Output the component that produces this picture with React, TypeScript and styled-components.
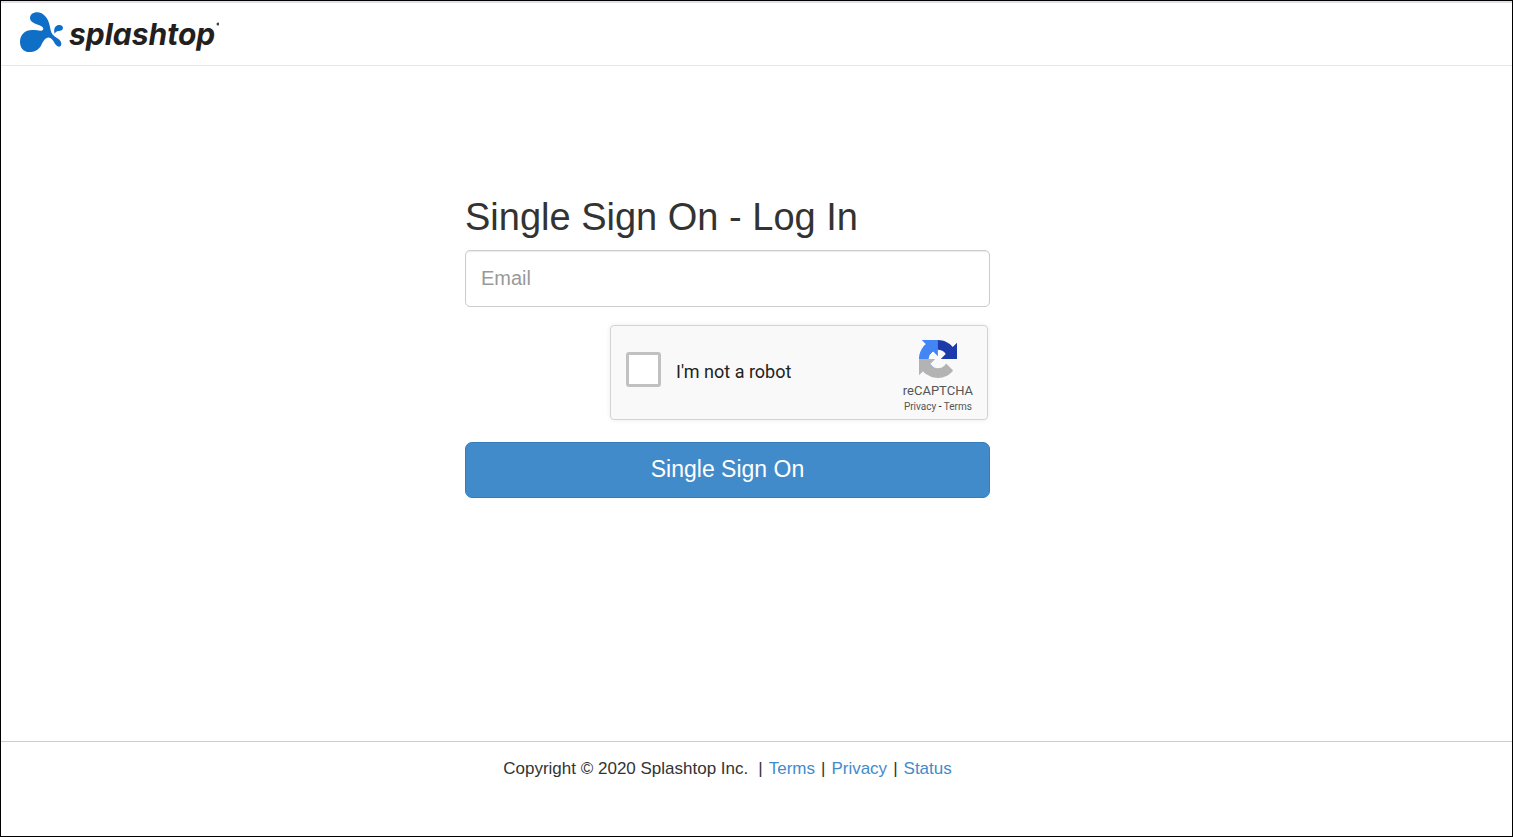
import React from "react";
import styled, { createGlobalStyle } from "styled-components";

const GlobalStyle = createGlobalStyle`
  *, *::before, *::after { box-sizing: border-box; }
  body {
    margin: 0;
    background: #fff;
    color: #333;
    font-family: "Liberation Sans", Arial, sans-serif;
  }
`;

const Page = styled.div`
  min-height: 100vh;
  display: flex;
  flex-direction: column;
  border: 1px solid #000;
`;

const Header = styled.header`
  height: 65px;
  display: flex;
  align-items: center;
  padding: 0 19px 4px;
  border-top: 2px solid #e3dde8;
  border-bottom: 1px solid #e7e7e7;
`;

const Brand = styled.a`
  display: flex;
  align-items: center;
  gap: 5px;
  color: #231f20;
  text-decoration: none;
`;

const Mark = styled.svg`
  width: 44px;
  height: 40px;
`;

const Wordmark = styled.span`
  display: flex;
  padding-top: 4px;
  font: italic 700 30px/40px Inter, sans-serif;
  font-feature-settings: "cv11";
`;

const TrademarkDot = styled.svg`
  width: 4px;
  height: 24px;
`;

const Main = styled.main`
  flex: 1;
  display: flex;
  flex-direction: column;
  align-items: center;
  padding: 128px 58px 40px 0;
`;

const Form = styled.form`
  width: 100%;
  max-width: 525px;
  display: flex;
  flex-direction: column;
`;

const Title = styled.h1`
  margin: 0 0 10px;
  font-size: 38px;
  line-height: 46px;
  font-weight: 400;
`;

const EmailInput = styled.input`
  width: 100%;
  height: 57px;
  padding: 0 15px;
  border: 1px solid #ccc;
  border-radius: 5px;
  box-shadow: inset 0 1px 1px rgba(0, 0, 0, 0.08);
  color: #555;
  font: 20px "Liberation Sans", Arial, sans-serif;
  &::placeholder { color: #999; opacity: 1; }
`;

const Captcha = styled.div`
  align-self: flex-end;
  width: 378px;
  max-width: 100%;
  height: 95px;
  margin: 18px 2px 22px 0;
  padding: 0 14px 0 15px;
  display: flex;
  justify-content: space-between;
  border: 1px solid #d3d3d3;
  border-radius: 4px;
  background: #f9f9f9;
  box-shadow: 0 0 5px rgba(0, 0, 0, 0.08);
  font-family: Roboto, sans-serif;
`;

const RobotLabel = styled.label`
  display: flex;
  align-items: center;
  gap: 15px;
  padding-bottom: 2px;
  color: #222;
  font-size: 18px;
`;

const Checkbox = styled.input`
  appearance: none;
  width: 35px;
  height: 35px;
  margin: 0 0 4px;
  border: 3px solid #c1c1c1;
  border-radius: 3px;
  background: #fff;
`;

const CaptchaBrand = styled.div`
  display: flex;
  flex-direction: column;
  align-items: center;
  padding-top: 14px;
  color: #555;
`;

const CaptchaIcon = styled.svg`
  width: 38px;
  height: 38px;
`;

const CaptchaName = styled.div`
  margin-top: 4px;
  font-size: 13px;
  line-height: 17px;
`;

const CaptchaLinks = styled.div`
  font-size: 10px;
  line-height: 16px;
  color: #000;
  a { color: #555; text-decoration: none; }
`;

const Submit = styled.button`
  height: 56px;
  padding: 0 16px 2px;
  border: 1px solid #357ebd;
  border-radius: 7px;
  background: #428bca;
  color: #fff;
  font: 23px "Liberation Sans", Arial, sans-serif;
`;

const Footer = styled.footer`
  height: 95px;
  display: flex;
  justify-content: center;
  gap: 6px;
  padding: 17px 58px 0 0;
  border-top: 1px solid #ccc;
  font-size: 17px;
  line-height: 20px;
  a { color: #428bca; text-decoration: none; }
`;

const Copyright = styled.span`
  margin-right: 4px;
`;

export default function App() {
  return (
    <>
      <GlobalStyle />
      <Page>
        <Header>
          <Brand href="#">
            <Mark viewBox="60 35 132 120" aria-hidden="true">
              <path
                fill="#0f6fc6"
                d="M60 124C60 103 75 89 97 89C110 89 117 92 124 91C130 90 132 85 127 80C119 72 91 71 90 54C90 43 99 36 111 36C131 36 146 55 150 80C152 93 155 101 163 108C171 114 184 119 184 131C184 137 179 141 173 138C163 133 161 115 148 112C136 110 130 123 123 136C115 149 103 155 88 155C71 155 60 142 60 124Z"
              />
              <path fill="#0f6fc6" d="M164 100C160 86 165 76 176 74C183 73 189 77 189 82C189 89 183 91 176 92C169 93 166 96 164 100Z" />
            </Mark>
            <Wordmark>
              splashtop
              <TrademarkDot viewBox="0 0 4 24" aria-hidden="true">
                <circle cx="3" cy="10" r="1.5" fill="#444" />
              </TrademarkDot>
            </Wordmark>
          </Brand>
        </Header>
        <Main>
          <Form onSubmit={(e) => e.preventDefault()}>
            <Title>Single Sign On - Log In</Title>
            <EmailInput type="email" placeholder="Email" aria-label="Email" />
            <Captcha>
              <RobotLabel>
                <Checkbox type="checkbox" />
                I'm not a robot
              </RobotLabel>
              <CaptchaBrand>
                <CaptchaIcon viewBox="0 0 64 64" aria-hidden="true">
                  <path fill="#1c3aa9" d="M64 31.955l-.033-1.37V4.687l-7.16 7.16C50.948 4.674 42.033.093 32.05.093c-10.4 0-19.622 4.96-25.458 12.64l11.736 11.86a15.55 15.55 0 0 1 4.754-5.334c2.05-1.6 4.952-2.906 8.968-2.906.485 0 .86.057 1.135.163 4.976.393 9.288 3.14 11.828 7.124l-8.307 8.307L64 31.953" />
                  <path fill="#4285f4" d="M31.862.094l-1.37.033H4.594l7.16 7.16C4.58 13.147 0 22.06 0 32.046c0 10.4 4.96 19.622 12.64 25.458L24.5 45.768a15.55 15.55 0 0 1-5.334-4.754c-1.6-2.05-2.906-4.952-2.906-8.968 0-.485.057-.86.163-1.135.393-4.976 3.14-9.288 7.124-11.828l8.307 8.307L31.86.095" />
                  <path fill="#b3b3b3" d="M.001 32.045l.033 1.37v25.898l7.16-7.16c5.86 7.173 14.774 11.754 24.76 11.754 10.4 0 19.622-4.96 25.458-12.64l-11.736-11.86a15.55 15.55 0 0 1-4.754 5.334c-2.05 1.6-4.952 2.906-8.968 2.906-.485 0-.86-.057-1.135-.163-4.976-.393-9.288-3.14-11.828-7.124l8.307-8.307c-10.522.04-22.4.066-27.295-.005" />
                </CaptchaIcon>
                <CaptchaName>reCAPTCHA</CaptchaName>
                <CaptchaLinks>
                  <a href="#">Privacy</a> - <a href="#">Terms</a>
                </CaptchaLinks>
              </CaptchaBrand>
            </Captcha>
            <Submit type="submit">Single Sign On</Submit>
          </Form>
        </Main>
        <Footer>
          <Copyright>Copyright © 2020 Splashtop Inc.</Copyright>
          <span>|</span>
          <a href="#">Terms</a>
          <span>|</span>
          <a href="#">Privacy</a>
          <span>|</span>
          <a href="#">Status</a>
        </Footer>
      </Page>
    </>
  );
}
